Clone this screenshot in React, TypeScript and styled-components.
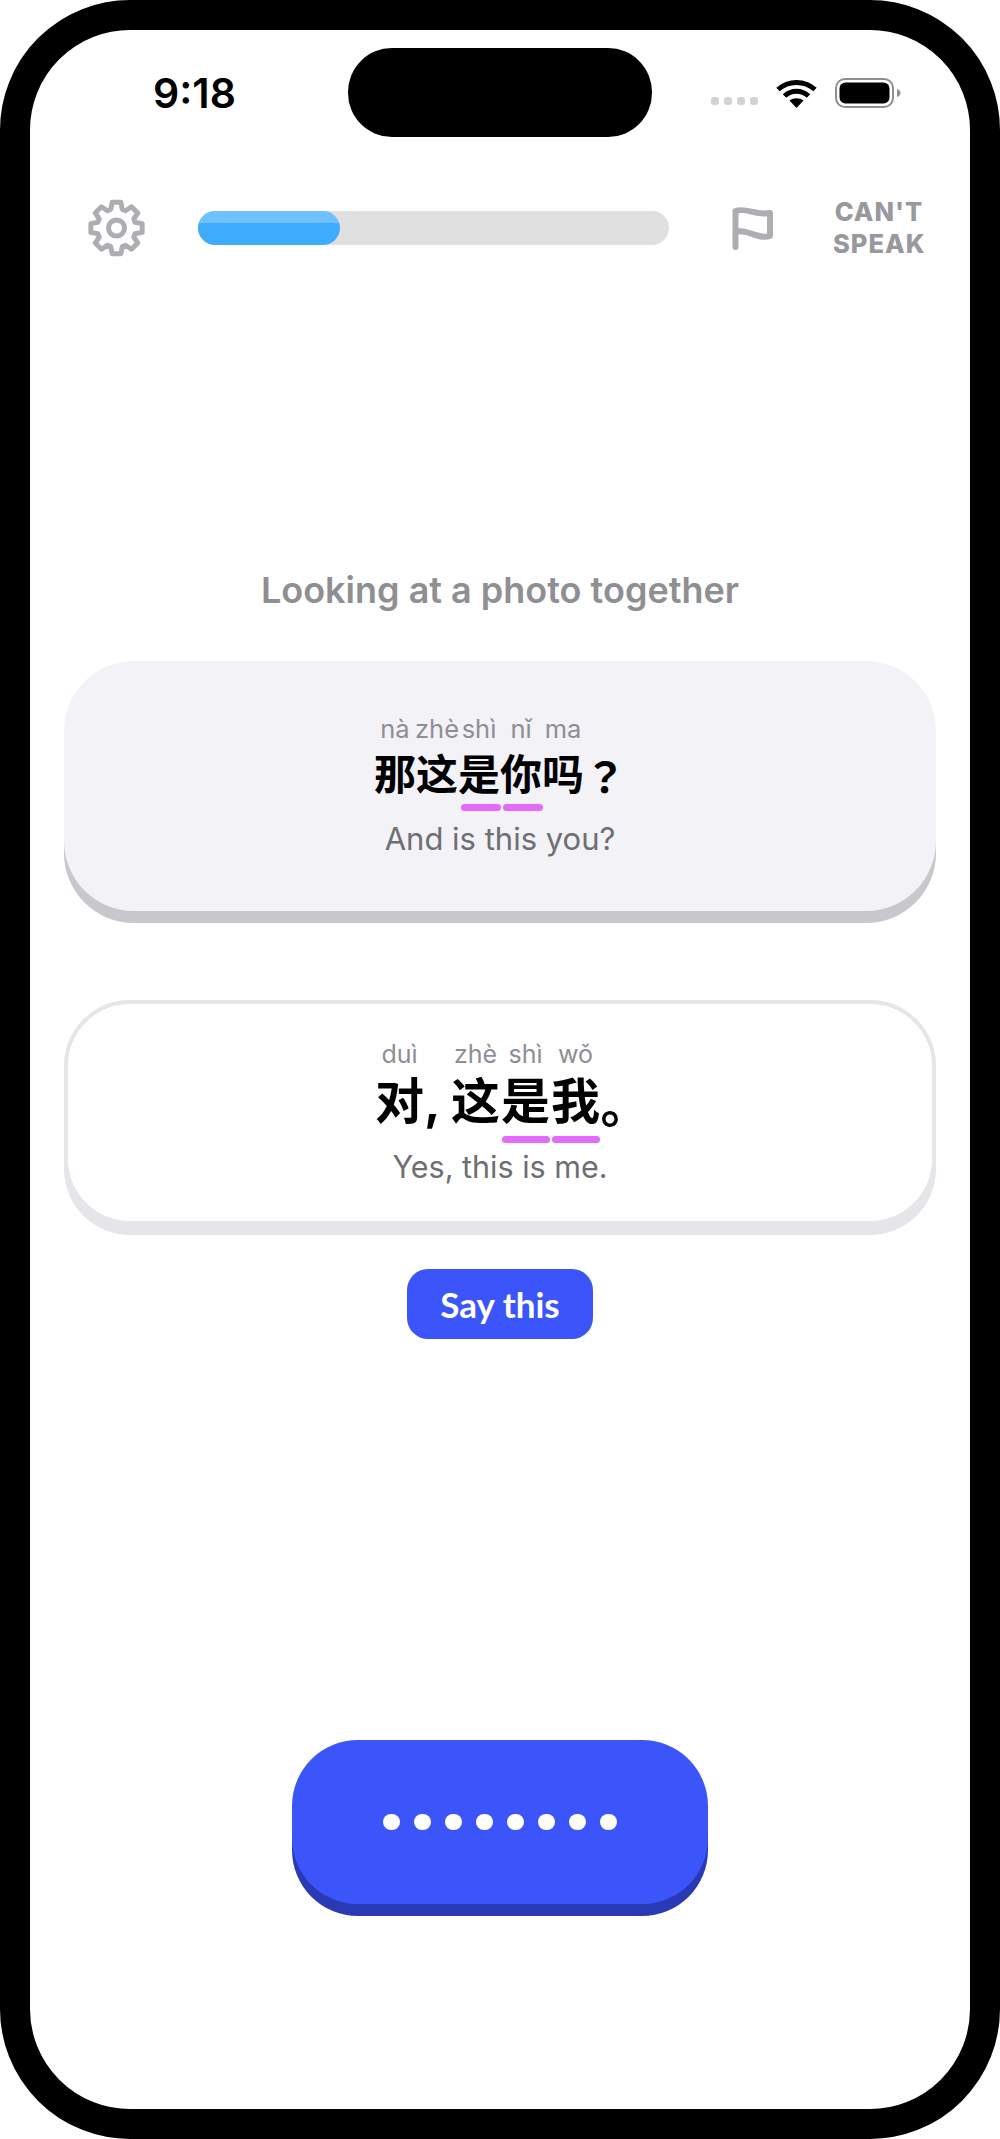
import React from 'react';
import styled, { createGlobalStyle } from 'styled-components';

const GlobalStyle = createGlobalStyle`
  html, body { margin: 0; padding: 0; background: #fff; }
  body { font-family: 'Inter', 'Noto Sans CJK SC', sans-serif; }
`;

const Frame = styled.div`
  box-sizing: border-box;
  width: 1000px;
  height: 2139px;
  border: 30px solid #000;
  border-radius: 130px;
  background: #fff;
  overflow: hidden;
`;

const StatusBar = styled.div`
  display: grid;
  grid-template-columns: 1fr 304px 1fr;
  align-items: center;
  height: 89px;
  margin-top: 18px;
`;

const Time = styled.div`
  padding-left: 123px;
  font-size: 41px;
  font-weight: 600;
  color: #000;
`;

const Island = styled.div`
  height: 89px;
  border-radius: 44px;
  background: #000;
`;

const StatusIcons = styled.div`
  display: flex;
  align-items: center;
  padding-left: 59px;
`;

const SignalDots = styled.div`
  display: flex;
  gap: 5px;
  margin: 16px 18px 0 0;
`;

const SignalDot = styled.span`
  width: 8px;
  height: 8px;
  border-radius: 3px;
  background: #d1d1d6;
`;

const Toolbar = styled.div`
  display: flex;
  align-items: center;
  height: 58px;
  margin-top: 62px;
  padding-left: 58px;
`;

const Track = styled.div`
  position: relative;
  width: 471px;
  height: 34px;
  margin: 0 63px 0 53px;
  border-radius: 17px;
  background: #e0e0e0;
`;

const Fill = styled.div`
  height: 34px;
  border-radius: 17px;
  background: linear-gradient(#6fc0fd 0, #6fc0fd 12px, #3eabfd 12px);
`;

const CantSpeak = styled.div`
  width: 92px;
  margin-left: 60px;
  font-size: 25.5px;
  line-height: 32px;
  font-weight: 800;
  letter-spacing: 1px;
  text-align: center;
  color: #98989e;
`;

const Prompt = styled.div`
  margin-top: 311px;
  font-size: 36px;
  line-height: 44px;
  font-weight: 600;
  text-align: center;
  color: #8e8e93;
`;

const Cards = styled.div`
  padding: 0 34px;
`;

const PromptCard = styled.div`
  box-sizing: border-box;
  height: 250px;
  margin-top: 49px;
  padding-top: 53px;
  border-radius: 70px;
  background: #f2f2f7;
  box-shadow: 0 12px 0 #c7c7cc;
`;

const AnswerCard = styled.div`
  box-sizing: border-box;
  height: 225px;
  margin-top: 89px;
  padding-top: 35px;
  border: 4px solid #e5e5ea;
  border-radius: 66px;
  background: #fff;
  box-shadow: 0 10px 0 #e5e5ea;
`;

const Sentence = styled.div`
  display: flex;
  justify-content: center;
`;

const Cell = styled.div<{ $width: number; $punct: boolean }>`
  display: flex;
  flex-direction: column;
  align-items: ${p => (p.$punct ? 'flex-start' : 'center')};
  width: ${p => p.$width}px;
`;

const Pinyin = styled.div<{ $size: number; $gap: number }>`
  height: 30px;
  margin-bottom: ${p => p.$gap}px;
  font-size: ${p => p.$size}px;
  line-height: 30px;
  white-space: nowrap;
  color: #8e8e93;
`;

const Hanzi = styled.div<{ $size: number }>`
  height: 54px;
  font-family: 'Inter', 'Noto Sans CJK SC', sans-serif;
  font-size: ${p => p.$size}px;
  line-height: 54px;
  font-weight: 700;
  white-space: pre;
  color: #000;
`;

const FullStop = styled(Hanzi)`
  font-family: 'Noto Sans CJK SC', sans-serif;
`;

const Question = styled(Hanzi)`
  font-family: 'Noto Sans CJK JP', sans-serif;
`;

const Marker = styled.div<{ $on: boolean; $gap: number; $shift: number }>`
  width: calc(100% - 2px);
  height: 7px;
  margin-top: ${p => p.$gap}px;
  margin-left: ${p => p.$shift}px;
  border-radius: 4px;
  background: ${p => (p.$on ? '#e26bfb' : 'transparent')};
`;

const Translation = styled.div<{ $size: number; $top: number }>`
  margin-top: ${p => p.$top}px;
  font-size: ${p => p.$size}px;
  line-height: 36px;
  text-align: center;
  color: #6e6e73;
`;

const SayRow = styled.div`
  display: flex;
  justify-content: center;
  margin-top: 44px;
`;

const SayButton = styled.button`
  width: 186px;
  height: 70px;
  padding: 0;
  border: none;
  border-radius: 21px;
  background: #3b55fb;
  font-family: 'Lato', sans-serif;
  font-size: 35px;
  font-weight: 700;
  color: #fff;
`;

const MicRow = styled.div`
  display: flex;
  justify-content: center;
  margin-top: 401px;
`;

const MicButton = styled.button`
  display: flex;
  align-items: center;
  justify-content: center;
  gap: 14.5px;
  width: 416px;
  height: 164px;
  padding: 0;
  border: none;
  border-radius: 66px;
  background: #3b55fb;
  box-shadow: 0 12px 0 #2a3ab5;
`;

const MicDot = styled.span`
  width: 16.5px;
  height: 16.5px;
  border-radius: 50%;
  background: #fff;
`;

// 8 tooth outline, stroked with round joins so the corners go soft
const gearPath = () => {
  const pts: string[] = [];
  for (let i = 0; i < 8; i++) {
    const a = (i * Math.PI) / 4 - Math.PI / 2;
    const at = (r: number, d: number) =>
      `${(28.5 + r * Math.cos(a + d)).toFixed(2)} ${(29 + r * Math.sin(a + d)).toFixed(2)}`;
    pts.push(at(19.5, -0.3), at(26, -0.17), at(26, 0.17), at(19.5, 0.3));
  }
  return `M${pts.join('L')}Z`;
};

const GearIcon = () => (
  <svg width="57" height="58" viewBox="0 0 57 58" fill="none" stroke="#aeaeb2" strokeWidth="5" strokeLinejoin="round">
    <path d={gearPath()} />
    <circle cx="28.5" cy="29" r="8" />
  </svg>
);

const FlagIcon = () => (
  <svg width="41" height="44" viewBox="0 0 41 44" fill="none" stroke="#aeaeb2" strokeWidth="6" strokeLinecap="round" strokeLinejoin="round">
    <path d="M3.5 41V5C14 1 24 10 38 7V30C26 34 14 22 3.5 26" />
  </svg>
);

const WifiIcon = () => (
  <svg width="41" height="30" viewBox="0 0 41 30" fill="none" stroke="#000" strokeWidth="5">
    <path d="M2 11.5C12.5 2 28.5 2 39 11.5" />
    <path d="M8.5 18C15.5 11.5 25.5 11.5 32.5 18" />
    <path d="M13.5 22.5C17.5 19.5 23.5 19.5 27.5 22.5L20.5 30Z" fill="#000" stroke="none" />
  </svg>
);

const BatteryIcon = () => (
  <svg width="66" height="30" viewBox="0 0 66 30" style={{ marginLeft: 18 }}>
    <rect x="1" y="1" width="57" height="28" rx="9" fill="none" stroke="#8e8e93" strokeWidth="2" />
    <rect x="4.5" y="4.5" width="50" height="21" rx="6" fill="#000" />
    <path d="M62 11C64.5 12 65.5 13.5 65.5 15S64.5 18 62 19Z" fill="#8e8e93" />
  </svg>
);

interface Syllable {
  py: string;
  zh: string;
  w: number;
  mark?: boolean;
}

const promptLine: Syllable[] = [
  { py: 'nà', zh: '那', w: 42 },
  { py: 'zhè', zh: '这', w: 42 },
  { py: 'shì', zh: '是', w: 42, mark: true },
  { py: 'nǐ', zh: '你', w: 42, mark: true },
  { py: 'ma', zh: '吗', w: 42 },
  { py: '', zh: '？', w: 42 },
];

const answerLine: Syllable[] = [
  { py: 'duì', zh: '对', w: 50 },
  { py: '', zh: ', ', w: 26 },
  { py: 'zhè', zh: '这', w: 50 },
  { py: 'shì', zh: '是', w: 50, mark: true },
  { py: 'wǒ', zh: '我', w: 50, mark: true },
  { py: '', zh: '。', w: 25 },
];

interface LineProps {
  items: Syllable[];
  pySize: number;
  zhSize: number;
  pyGap: number;
  markGap: number;
  markShift: number;
}

const Line: React.FC<LineProps> = ({ items, pySize, zhSize, pyGap, markGap, markShift }) => (
  <Sentence>
    {items.map((s, i) => (
      <Cell key={i} $width={s.w} $punct={s.zh === '。'}>
        <Pinyin $size={pySize} $gap={pyGap}>{s.py}</Pinyin>
        {s.zh === '。' ? (
          <FullStop $size={zhSize}>{s.zh}</FullStop>
        ) : s.zh === '？' ? (
          <Question $size={zhSize}>{s.zh}</Question>
        ) : (
          <Hanzi $size={zhSize}>{s.zh}</Hanzi>
        )}
        <Marker $on={!!s.mark} $gap={markGap} $shift={markShift} />
      </Cell>
    ))}
  </Sentence>
);

const App: React.FC = () => (
  <Frame>
    <GlobalStyle />
    <StatusBar>
      <Time>9:18</Time>
      <Island />
      <StatusIcons>
        <SignalDots>
          {[0, 1, 2, 3].map(i => <SignalDot key={i} />)}
        </SignalDots>
        <WifiIcon />
        <BatteryIcon />
      </StatusIcons>
    </StatusBar>
    <Toolbar>
      <GearIcon />
      <Track>
        <Fill style={{ width: `${(142 / 471) * 100}%` }} />
      </Track>
      <FlagIcon />
      <CantSpeak>CAN'T<br />SPEAK</CantSpeak>
    </Toolbar>
    <Prompt>Looking at a photo together</Prompt>
    <Cards>
      <PromptCard>
        <Line items={promptLine} pySize={25.5} zhSize={42} pyGap={4} markGap={1.5} markShift={4} />
        <Translation $size={31} $top={10.5}>And is this you?</Translation>
      </PromptCard>
      <AnswerCard>
        <Line items={answerLine} pySize={25} zhSize={49} pyGap={6} markGap={6.5} markShift={0} />
        <Translation $size={30.5} $top={6}>Yes, this is me.</Translation>
      </AnswerCard>
    </Cards>
    <SayRow>
      <SayButton>Say this</SayButton>
    </SayRow>
    <MicRow>
      <MicButton>
        {[0, 1, 2, 3, 4, 5, 6, 7].map(i => <MicDot key={i} />)}
      </MicButton>
    </MicRow>
  </Frame>
);

export default App;
